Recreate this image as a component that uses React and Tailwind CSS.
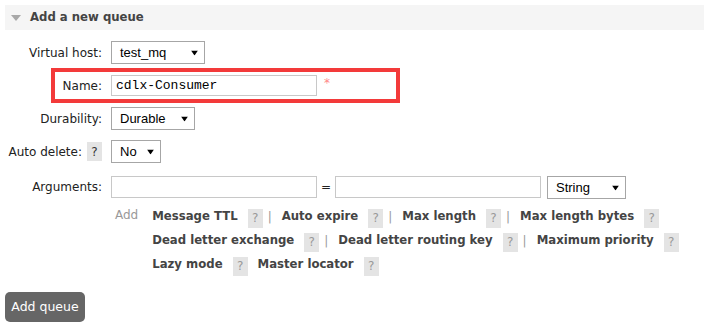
import React from "react";

const font = { fontFamily: '"DejaVu Sans", Verdana, sans-serif' };

function Arrow() {
    return (
        <svg width="7" height="5" viewBox="0 0 7 5" className="absolute right-[6px] top-1/2 -translate-y-1/2">
            <polygon points="0,0 7,0 3.5,5" fill="#000" />
        </svg>
    );
}

function Select({ value, width }) {
    return (
        <div
            className={`relative h-[23px] ${width} border border-[#a6a6a6] bg-white flex items-center pl-[8px] text-[13px] text-black`}
            style={{ fontFamily: '"Liberation Sans", Arial, sans-serif' }}
        >
            {value}
            <Arrow />
        </div>
    );
}

function Help({ dark }) {
    return (
        <span
            className={`inline-flex items-center justify-center w-[15px] h-[19px] bg-[#e4e4e4] text-[12px] font-normal ${
                dark ? "text-[#333]" : "text-[#999]"
            }`}
        >
            ?
        </span>
    );
}

function Row({ label, children, extra, className = "" }) {
    return (
        <div className={`relative flex items-center h-[33px] ${className}`}>
            <div className="w-[102px] flex justify-end items-center gap-[5px] text-[12px] text-[#222]">
                {label}
                {extra}
            </div>
            <div className="ml-[9px] flex items-center">{children}</div>
        </div>
    );
}

function Arg({ name, pipe }) {
    return (
        <span className="flex items-center">
            <span className="font-bold text-[#444] text-[11.7px]">{name}</span>
            <span className="ml-[10px]">
                <Help />
            </span>
            {pipe && <span className="ml-[5px] mr-[10px] text-[#999] text-[12px]">|</span>}
        </span>
    );
}

export default function App() {
    return (
        <div className="w-[709px] h-[330px] bg-white" style={font}>
            <div className="mx-[5px] mt-[5px] h-[25px] bg-[#f5f5f5] flex items-center">
                <svg width="10" height="6" viewBox="0 0 10 6" className="ml-[6px]">
                    <polygon points="0,0 10,0 5,6" fill="#a8a8a8" />
                </svg>
                <span className="ml-[9px] font-bold text-[11.7px] text-[#444]">Add a new queue</span>
            </div>

            <div className="mt-[6px]">
                <Row label="Virtual host:">
                    <Select value="test_mq" width="w-[94px]" />
                </Row>
                <Row label="Name:">
                    <div
                        className="w-[206px] h-[21px] border border-[#c8c8c8] flex items-center pl-[4px] text-[13px] text-black"
                        style={{ fontFamily: '"Liberation Mono", "Courier New", monospace' }}
                    >
                        cdlx-Consumer
                    </div>
                    <span className="ml-[7px] text-[12px] text-[#f88] -mt-[6px]">*</span>
                    <div className="absolute left-[51px] top-[-1px] w-[349px] h-[35px] border-[4px] border-[#f33a3a]" />
                </Row>
                <Row label="Durability:">
                    <Select value="Durable" width="w-[84px]" />
                </Row>
                <Row label="Auto delete:" extra={<Help dark />}>
                    <Select value="No" width="w-[50px]" />
                </Row>
                <Row label="Arguments:" className="mt-[2px]">
                    <div className="w-[206px] h-[22px] border border-[#c8c8c8]" />
                    <span className="w-[18px] text-center text-[12px] text-[#222]">=</span>
                    <div className="w-[206px] h-[22px] border border-[#c8c8c8]" />
                    <div className="ml-[6px] mt-[2px]">
                        <Select value="String" width="w-[79px]" />
                    </div>
                </Row>

                <div className="flex mt-[2px]">
                    <span className="ml-[115px] text-[12px] text-[#999] leading-[20px]">Add</span>
                    <div className="ml-[14px] flex flex-col">
                        <div className="flex items-center h-[24px]">
                            <Arg name="Message TTL" pipe />
                            <Arg name="Auto expire" pipe />
                            <Arg name="Max length" pipe />
                            <Arg name="Max length bytes" />
                        </div>
                        <div className="flex items-center h-[24px]">
                            <Arg name="Dead letter exchange" pipe />
                            <Arg name="Dead letter routing key" pipe />
                            <Arg name="Maximum priority" />
                        </div>
                        <div className="flex items-center h-[24px] gap-[10px]">
                            <Arg name="Lazy mode" />
                            <Arg name="Master locator" />
                        </div>
                    </div>
                </div>

                <button className="block ml-[5px] mt-[15px] w-[80px] h-[30px] bg-[#666] rounded-[5px] text-white text-[12.5px]">
                    Add queue
                </button>
            </div>
        </div>
    );
}
